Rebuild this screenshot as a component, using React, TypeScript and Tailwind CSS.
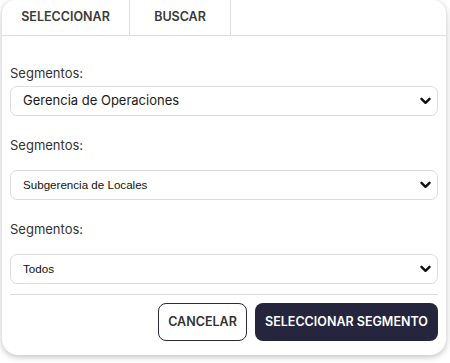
import React from "react";

function Chevron() {
  return (
    <svg width="11" height="8" viewBox="0 0 11 8" className="shrink-0">
      <path d="M1.5 1.8 L5.5 5.8 L9.5 1.8" fill="none" stroke="#111" strokeWidth="2.4" strokeLinecap="round" strokeLinejoin="round" />
    </svg>
  );
}

function Select({ text, arial }: { text: string; arial?: boolean }) {
  return (
    <div className="h-[30px] rounded-[7px] border border-[#dcdcdc] flex items-center justify-between pl-[12px] pr-[6px] bg-white">
      <span
        className={arial ? "text-[11.6px] text-[#111]" : "text-[13px] text-[#1a1a1a]"}
        style={{ fontFamily: arial ? '"Liberation Sans", Arial, sans-serif' : 'Inter, sans-serif' }}
      >
        {text}
      </span>
      <Chevron />
    </div>
  );
}

export default function App() {
  return (
    <div className="w-[450px] h-[363px] bg-white" style={{ fontFamily: "Inter, sans-serif" }}>
      <div className="ml-[2px] w-[444px] h-[355px] rounded-b-[16px] rounded-t-[14px] bg-white shadow-[0_2px_6px_rgba(0,0,0,0.25)] flex flex-col overflow-hidden">
        <div className="h-[36px] flex border-b border-[#dedede] shrink-0">
          <div className="w-[128px] border-r border-[#dedede] flex items-center justify-center text-[12.5px] font-semibold text-[#3a3a3a]">
            SELECCIONAR
          </div>
          <div className="w-[101px] border-r border-[#dedede] flex items-center justify-center text-[12.5px] font-semibold text-[#3a3a3a]">
            BUSCAR
          </div>
        </div>
        <div className="px-[8px] flex flex-col">
          <div className="mt-[29px] h-[16px] text-[13px] leading-[16px] text-[#333]">Segmentos:</div>
          <div className="mt-[5px]">
            <Select text="Gerencia de Operaciones" />
          </div>
          <div className="mt-[21px] h-[16px] text-[13px] leading-[16px] text-[#333]">Segmentos:</div>
          <div className="mt-[17px]">
            <Select text="Subgerencia de Locales" arial />
          </div>
          <div className="mt-[21px] h-[16px] text-[13px] leading-[16px] text-[#333]">Segmentos:</div>
          <div className="mt-[17px]">
            <Select text="Todos" arial />
          </div>
          <div className="mt-[10px] border-t border-[#dcdcdc]" />
          <div className="mt-[8px] flex justify-end gap-[8px]">
            <button className="h-[38px] w-[89px] rounded-[8px] border border-[#2a2a40] text-[12.5px] font-semibold text-[#333] bg-white">
              CANCELAR
            </button>
            <button className="h-[38px] w-[183px] rounded-[8px] bg-[#25253d] text-[12.5px] font-semibold text-white">
              SELECCIONAR SEGMENTO
            </button>
          </div>
        </div>
      </div>
    </div>
  );
}
